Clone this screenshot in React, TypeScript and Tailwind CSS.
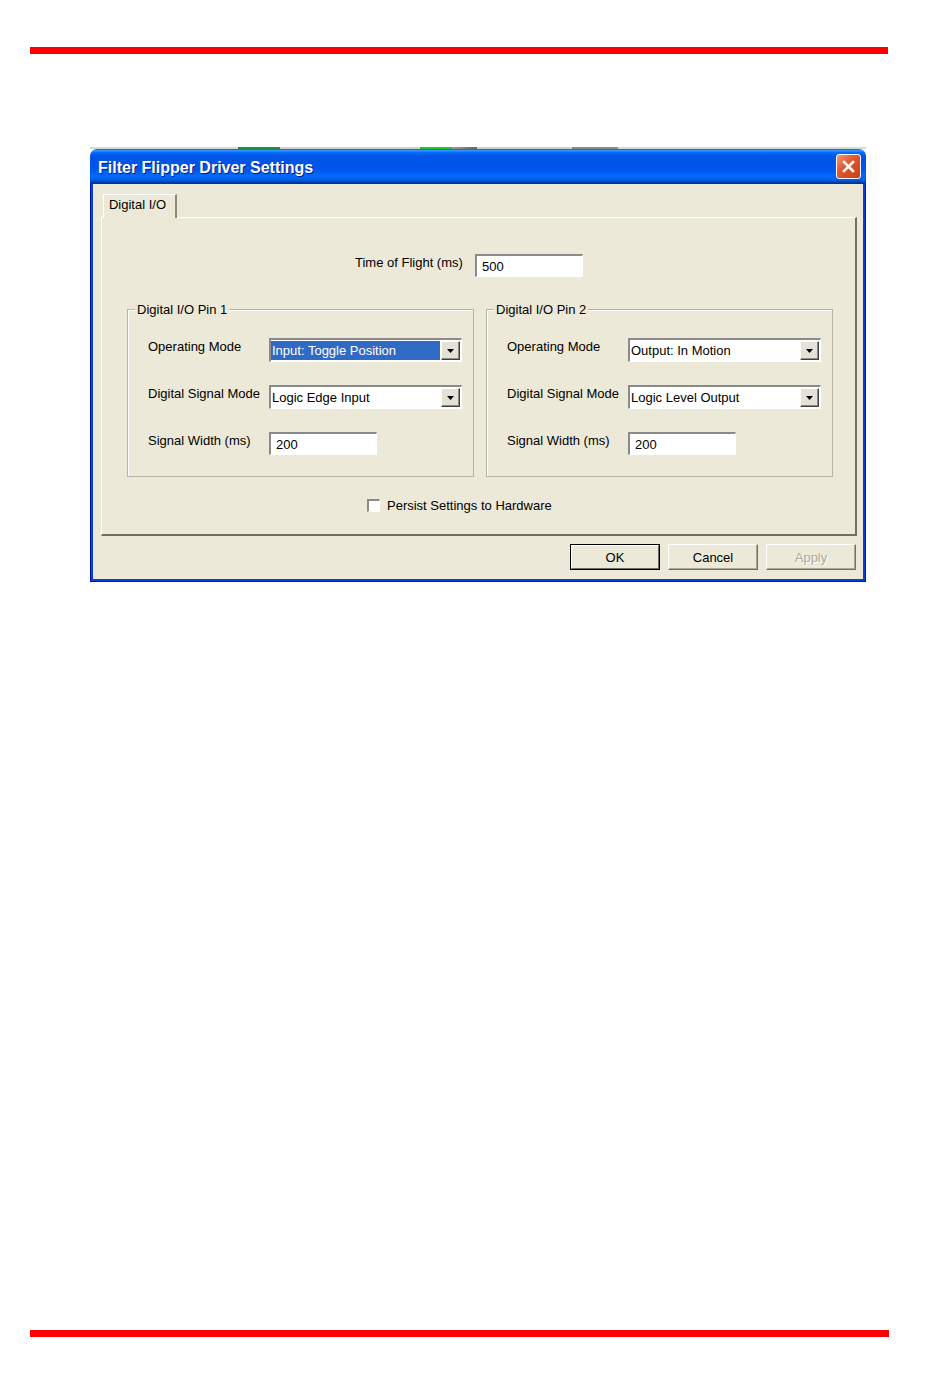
const sunken =
  "border-t-2 border-l-2 border-t-[#8a8a8a] border-l-[#8a8a8a] border-b border-r border-b-white border-r-white";

function TextBox({ value, w }: { value: string; w: string }) {
  return (
    <div className={`${w} h-[23px] bg-white ${sunken} flex items-center pl-[5px] pt-[1px] leading-4`}>
      {value}
    </div>
  );
}

function Combo({ value, selected }: { value: string; selected?: boolean }) {
  return (
    <div className={`w-[193px] h-[24px] bg-white ${sunken} flex py-[1px] pr-[1px]`}>
      <div
        className={`flex-1 flex items-center pl-[1px] pt-[1px] leading-4 ${
          selected ? "bg-[#316ac5] text-white" : ""
        }`}
      >
        {value}
      </div>
      <div className="ml-[1px] w-[19px] bg-[#e4e1d6] border-t border-l border-t-white border-l-white border-b border-r border-b-[#404040] border-r-[#404040] shadow-[inset_-1px_-1px_0_#8a8a8a] flex items-center justify-center">
        <svg width="7" height="4" viewBox="0 0 7 4">
          <polygon points="0,0 7,0 3.5,4" fill="#000" />
        </svg>
      </div>
    </div>
  );
}

function Row({ label, children }: { label: string; children: React.ReactNode }) {
  return (
    <div className="flex items-start">
      <div className="w-[121px] pt-[1px] leading-4 whitespace-nowrap">{label}</div>
      {children}
    </div>
  );
}

function Group({
  title,
  op,
  opSelected,
  sig,
}: {
  title: string;
  op: string;
  opSelected?: boolean;
  sig: string;
}) {
  return (
    <div className="relative w-[347px] h-[168px] border border-[#b5b3a8] shadow-[inset_1px_1px_0_#fff] pt-[28px] pl-[20px]">
      <div className="absolute left-[7px] -top-[8px] px-[2px] bg-[#ece9d8] leading-4 whitespace-nowrap">
        {title}
      </div>
      <div className="flex flex-col gap-[23px]">
        <Row label="Operating Mode">
          <Combo value={op} selected={opSelected} />
        </Row>
        <Row label="Digital Signal Mode">
          <Combo value={sig} />
        </Row>
        <Row label="Signal Width (ms)">
          <TextBox value="200" w="w-[108px]" />
        </Row>
      </div>
    </div>
  );
}

function Button({
  label,
  isDefault,
  disabled,
}: {
  label: string;
  isDefault?: boolean;
  disabled?: boolean;
}) {
  if (isDefault) {
    return (
      <div className="w-[90px] h-[26px] border border-black">
        <div className="w-full h-full border-t border-l border-t-white border-l-white border-b border-r border-b-[#716f64] border-r-[#716f64] flex items-center justify-center pt-[1px] leading-4">
          {label}
        </div>
      </div>
    );
  }
  return (
    <div
      className={`w-[90px] h-[26px] border-t border-l border-t-white border-l-white border-b border-r border-b-[#716f64] border-r-[#716f64] shadow-[inset_-1px_-1px_0_#aca899] flex items-center justify-center pt-[1px] leading-4 ${
        disabled ? "text-[#aca899] [text-shadow:1px_1px_0_#fff]" : ""
      }`}
    >
      {label}
    </div>
  );
}

export default function App() {
  return (
    <div className="w-[950px] h-[1381px] bg-white flex flex-col font-['Liberation_Sans',Arial,sans-serif] text-[13px] text-black">
      <div className="mt-[47px] ml-[30px] w-[858px] h-[7px] bg-[#ff0000]" />

      <div className="mt-[93px] ml-[90px] w-[776px]">
        {/* windows behind the dialog */}
        <div className="h-[2px] flex">
          <div className="w-[148px] bg-[#d8d8d8]" />
          <div className="w-[42px] bg-[#1e8f3c]" />
          <div className="w-[140px] bg-[#d0d0d0]" />
          <div className="w-[32px] bg-[#22c82a]" />
          <div className="w-[25px] bg-[linear-gradient(to_right,#999,#666)]" />
          <div className="w-[95px] bg-[#cfcfcf]" />
          <div className="w-[46px] bg-[#8a8a8a]" />
          <div className="flex-1 bg-[#d8d8d8]" />
        </div>

        {/* title bar */}
        <div className="h-[35px] rounded-t-[7px] bg-[linear-gradient(to_bottom,#0058ee_0%,#3593ff_4%,#288eff_6%,#127dff_8%,#036ffc_10%,#0262ee_14%,#0057e5_20%,#0054e3_24%,#0055eb_56%,#005bf5_66%,#026afe_76%,#0062ef_86%,#0052d6_92%,#0040ab_94%,#003092_100%)] flex items-center pl-[8px] pr-[5px]">
          <div className="flex-1 pt-[3px] text-white font-bold text-[16px] leading-5 [text-shadow:1px_1px_0_#0a1a7a] whitespace-nowrap">
            Filter Flipper Driver Settings
          </div>
          <div className="w-[25px] h-[25px] rounded-[3px] border border-white bg-[linear-gradient(135deg,#f49a7c_0%,#e2582f_40%,#c93c19_100%)] flex items-center justify-center">
            <svg width="13" height="13" viewBox="0 0 13 13">
              <path d="M2 2 L11 11 M11 2 L2 11" stroke="#fff" strokeWidth="2.6" strokeLinecap="square" />
            </svg>
          </div>
        </div>

        {/* frame + client */}
        <div className="bg-[#0a3ed8] px-[3px] pb-[3px] shadow-[inset_1px_0_0_#0019a8,inset_-1px_0_0_#0019a8,inset_0_-1px_0_#0019a8]">
          <div className="h-[395px] bg-[#ece9d8] pt-[10px] pl-[8px] pr-[6px]">
            <div className="flex">
              <div className="relative z-10 ml-[2px] -mb-[1px] w-[74px] h-[24px] bg-[#ece9d8] border-t border-l border-t-white border-l-white border-r-2 border-r-[#8d8b80] flex items-start justify-center pt-[2px] pr-[4px] leading-4">
                Digital I/O
              </div>
            </div>

            <div className="h-[319px] border-t border-l border-t-white border-l-white border-r-2 border-b-2 border-r-[#716f64] border-b-[#716f64] pt-[36px]">
              <div className="flex items-start pl-[253px]">
                <div className="w-[120px] pt-[1px] leading-4 whitespace-nowrap">Time of Flight (ms)</div>
                <TextBox value="500" w="w-[108px]" />
              </div>

              <div className="mt-[32px] flex pl-[25px] gap-[12px]">
                <Group
                  title="Digital I/O Pin 1"
                  op="Input: Toggle Position"
                  opSelected
                  sig="Logic Edge Input"
                />
                <Group
                  title="Digital I/O Pin 2"
                  op="Output: In Motion"
                  sig="Logic Level Output"
                />
              </div>

              <div className="mt-[20px] flex items-center pl-[265px] gap-[7px]">
                <div className={`w-[13px] h-[13px] bg-white ${sunken}`} />
                <div className="pt-[1px] leading-4 whitespace-nowrap">Persist Settings to Hardware</div>
              </div>
            </div>

            <div className="mt-[8px] flex justify-end gap-[8px] pr-[1px]">
              <Button label="OK" isDefault />
              <Button label="Cancel" />
              <Button label="Apply" disabled />
            </div>
          </div>
        </div>
      </div>

      <div className="mt-auto mb-[44px] ml-[30px] w-[859px] h-[7px] bg-[#ff0000]" />
    </div>
  );
}
